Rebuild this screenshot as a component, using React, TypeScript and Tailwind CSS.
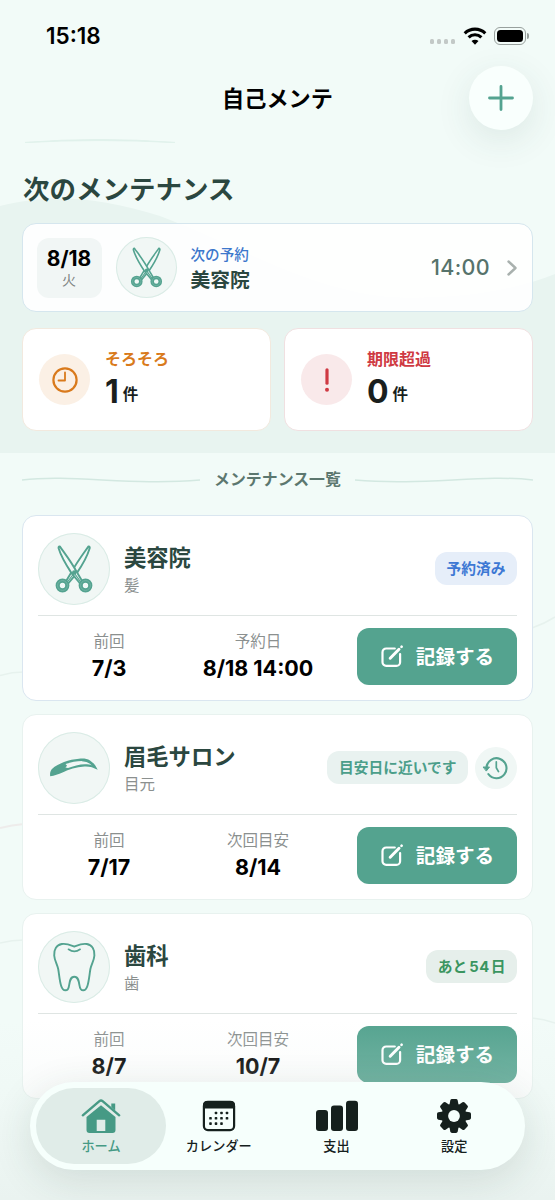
import type { ReactNode } from "react";
import { clsx } from "clsx";

type IconProps = { className?: string };

const ScissorsIcon = ({ className }: IconProps) => (
  <svg viewBox="0 0 72 72" fill="none" className={className}>
    <g stroke="#54a390" strokeWidth="1.9" strokeLinejoin="round">
      <path d="M50.500 13.400c1-.2 1.600.8 1.100 2.200-1.600 5.300-5.500 14-12.800 24.500l-8.600 10.400-2.200-2.200 5.700-9.500C39 29 45.500 20.500 50.500 13.400Z" fill="#f1f8f6" />
      <path d="M21.800 13.400c-1-.2-1.600.8-1.100 2.200C22.300 20.900 26.500 29.600 33.500 40.100l8.600 10.400 2.200-2.200-5.700-9.500C33.500 29 26.800 20.500 21.800 13.400Z" fill="#f1f8f6" />
      <path d="M36.200 40l6.200 8.500M36.200 40l-6.400 8.500" strokeWidth="1.200" />
    </g>
    <circle cx="36.200" cy="39.500" r="2.200" fill="#54a390" />
    {[24.5, 47.5].map((cx) => (
      <g key={cx}>
        <circle cx={cx} cy="52.500" r="4.800" fill="#f1f8f6" stroke="#54a390" strokeWidth="4.200" />
        <circle cx={cx} cy="52.500" r="4.900" stroke="#86c0b1" strokeWidth=".6" />
      </g>
    ))}
  </svg>
);

const EyebrowIcon = ({ className }: IconProps) => (
  <svg viewBox="0 0 72 72" className={className}>
    <path
      d="M12.200 44.200c-.4-2.700 0-4.900 1.500-7C17.500 33.400 21.500 32 26 30c5-1.800 10-2.900 15-3.300 4.500-.4 8.300 0 11 1.700 3.300 2.200 5.700 5 7.700 9.400-4.400-2.500-8.700-3.600-13.200-3.300C38 35 31 37 24.500 40.500c-4 1.800-8 3.300-12.300 3.700ZM27.500 32l1.600 1.700-1.700 1.800 2.600.5c5-1.800 11.500-3.600 17-3.700 2.800 0 5.200.3 7.400 1.100-1.800-2.200-4-3.900-7.400-4.300-6.500-.5-13 .8-19.500 2.900Z"
      fill="#54a390"
      fillRule="evenodd"
    />
    <path d="M44 28.500c5 .2 8.700 2 12 6" fill="none" stroke="#54a390" strokeWidth="1.300" />
  </svg>
);

const ToothIcon = ({ className }: IconProps) => (
  <svg viewBox="0 0 72 72" fill="none" stroke="#54a390" strokeWidth="1.900" strokeLinecap="round" strokeLinejoin="round" className={className}>
    <path d="M36.300 15.600c-3.800-1.500-8-3.500-12.500-2.600-5.500 1-8 6-7.600 11.500.3 5 3 8.500 4 13.500 1 5.500 1.300 11.500 3 17 .9 2.900 2 4.300 4.200 4.300 2.600 0 3.300-1.800 3.700-5 .6-4.300 1.300-8.600 5.200-8.600s4.600 4.300 5.200 8.600c.4 3.200 1.100 5 3.700 5 2.200 0 3.300-1.400 4.200-4.300 1.700-5.500 2-11.500 3-17 1-5 3.700-8.500 4-13.500.4-5.500-2.100-10.500-7.600-11.500-4.500-.9-8.700 1.100-12.500 2.600Z" />
    <path d="M30.500 18.300c3.700 2.600 8 2.600 11.600 0" strokeWidth="1.700" />
  </svg>
);

const EditIcon = () => (
  <svg viewBox="0 0 24 24" fill="none" stroke="white" strokeWidth="2.200" strokeLinecap="round" strokeLinejoin="round" className="size-6">
    <path d="M14.800 4.500H6.200A3.700 3.700 0 0 0 2.500 8.200v10a3.700 3.700 0 0 0 3.700 3.700h10.200a3.700 3.700 0 0 0 3.700-3.700V10" />
    <path d="m10.200 14.200 8.800-8.900" strokeWidth="3" />
    <path d="m21.500 2.900.1-.1" strokeWidth="2.700" />
  </svg>
);

const HistoryIcon = () => (
  <svg viewBox="0 0 28 28" fill="none" stroke="#54a390" strokeWidth="2.100" strokeLinecap="round" strokeLinejoin="round" className="size-7">
    <path d="M4.500 13.500A10 10 0 1 1 6.300 20" />
    <path d="M14.300 7.800v6l2.200 3.800" strokeWidth="1.700" />
    <path d="M1.500 13h6L4.500 16.800Z" fill="#54a390" strokeWidth="1" />
  </svg>
);

const WifiIcon = () => (
  <svg viewBox="0 0 24 18" fill="none" stroke="black" strokeWidth="3.100" className="h-[18px] w-6">
    <path d="M1.700 6.300a14.800 14.800 0 0 1 20.600 0" />
    <path d="M5.600 10.400a9.200 9.200 0 0 1 12.800 0" />
    <path d="M12 17.800 8.500 14.100a5 5 0 0 1 7 0Z" fill="black" stroke="none" />
  </svg>
);

const HomeIcon = () => (
  <svg viewBox="0 0 40 36" className="h-9 w-10">
    <path d="M20 7.300 34.500 19v13a3 3 0 0 1-3 3h-23a3 3 0 0 1-3-3V19Zm-4.300 14.500V33h8.600V21.800Z" fill="#469a85" fillRule="evenodd" />
    <path d="M1.800 17.300 18.400 3.200a2.500 2.500 0 0 1 3.200 0L38.200 17.300" fill="none" stroke="#469a85" strokeWidth="2.400" strokeLinecap="round" />
    <path d="M30.300 9V5.600h3.900v7Z" fill="#469a85" />
  </svg>
);

const CalendarIcon = () => (
  <svg viewBox="0 0 34 32" className="h-8 w-[34px]">
    <rect x="1.900" y="1.900" width="30.200" height="28.200" rx="4" fill="none" stroke="#15201d" strokeWidth="2.200" />
    <path d="M1 8.500V5a4 4 0 0 1 4-4h24a4 4 0 0 1 4 4v3.500Z" fill="#15201d" />
    {[
      [14, 13], [19.5, 13], [25, 13],
      [8.5, 18.3], [14, 18.3], [19.5, 18.3], [25, 18.3],
      [8.5, 23.6], [14, 23.6], [19.5, 23.6],
    ].map(([x, y]) => (
      <rect key={`${x}-${y}`} x={x - 1.3} y={y - 1.3} width="2.600" height="2.600" rx=".7" fill="#15201d" />
    ))}
  </svg>
);

const ChartIcon = () => (
  <svg viewBox="0 0 42 32" fill="#15201d" className="h-8 w-[42px]">
    <rect x="0" y="10" width="12" height="21" rx="3" />
    <rect x="15" y="5.500" width="12" height="25.500" rx="3" />
    <rect x="30" y=".7" width="12" height="30.300" rx="3" />
  </svg>
);

const GearIcon = () => (
  <svg viewBox="0 0 36 36" className="size-9">
    <g fill="#15201d">
      {[0, 45, 90, 135].map((deg) => (
        <path key={deg} d="M14.300 2.400Q14.600 1 16 1h4q1.400 0 1.700 1.400L22.600 7v22l-.9 4.600Q21.400 35 20 35h-4q-1.400 0-1.700-1.400L13.400 29V7Z" transform={`rotate(${deg} 18 18)`} />
      ))}
      <circle cx="18" cy="18" r="12.500" />
    </g>
    <circle cx="18" cy="18" r="5.900" fill="#f6fffc" />
  </svg>
);

const Backdrop = () => (
  <svg viewBox="0 0 555 1200" fill="none" className="absolute inset-0 h-[1200px] w-[555px]">
    <path d="M0 206C50 193 100 197 160 216C240 246 320 298 410 298C470 298 515 290 555 274V453H0Z" fill="#e8f4f0" />
    <path d="M25 142.500Q98 136.500 175 142.500Q98 138.500 25 142.500Z" fill="#dceee8" stroke="#e1f2ec" />
    <path d="M0 675.500Q12 672 24 672M532 628Q544 624 555 617M0 943Q12 940 24 940M532 1018Q544 1019 555 1023" stroke="#e7f2ee" strokeWidth="1.500" />
    <path d="M0 828Q12 825 24 824" stroke="#eeeceb" strokeWidth="2" />
  </svg>
);

type CircleProps = { size: string; children: ReactNode };

const IconCircle = ({ size, children }: CircleProps) => (
  <div className={clsx("shrink-0 overflow-hidden rounded-full bg-[#f1f7f5] ring-1 ring-inset ring-[#d9ebe5]", size)}>{children}</div>
);

const StatusBar = () => (
  <div className="flex h-[66px] items-center justify-between pt-[5px] pr-[26px] pl-[46px]">
    <span className="text-[22.500px] font-semibold">15:18</span>
    <div className="flex items-center">
      <div className="mt-3 mr-2 flex gap-[2.500px]">
        {[0, 1, 2, 3].map((i) => (
          <span key={i} className="size-[4.500px] rounded-[1.500px] bg-[#c3c9c7]" />
        ))}
      </div>
      <WifiIcon />
      <div className="ml-[7px] h-[18px] w-[32px] rounded-[6px] border border-[#98a09d] p-[2px]">
        <div className="h-full rounded-[3.500px] bg-black" />
      </div>
      <span className="ml-px h-[6px] w-[2px] rounded-r-full bg-[#98a09d]" />
    </div>
  </div>
);

const NextReservation = () => (
  <div className="flex h-[89px] items-center rounded-[14px] border-[1.500px] border-[#d5e6ee] bg-white/90 pr-[15px] pl-[13.500px]">
    <div className="flex h-[60px] w-[65px] flex-col items-center justify-center rounded-xl bg-[#f1f6f5]">
      <span className="text-[21px] leading-6 font-bold">8/18</span>
      <span className="text-sm leading-[18px] text-[#7f8583]">火</span>
    </div>
    <div className="ml-[14px]">
      <IconCircle size="size-[61px]">
        <ScissorsIcon className="size-full" />
      </IconCircle>
    </div>
    <div className="ml-[14px] flex-1 pt-px">
      <p className="text-[14.600px] leading-5 font-medium text-[#3d78cc]">次の予約</p>
      <p className="mt-[3px] text-[19.800px] leading-6 font-bold text-[#2b4740]">美容院</p>
    </div>
    <span className="text-[21.500px] font-medium tracking-[0.350px] text-[#56736b]">14:00</span>
    <svg viewBox="0 0 10 16" fill="none" stroke="#a9b1ae" strokeWidth="2.400" strokeLinecap="round" strokeLinejoin="round" className="ml-[17px] h-4 w-[10px]">
      <path d="m1.500 1.500 7 6.500-7 6.500" />
    </svg>
  </div>
);

type CountCardProps = { label: string; count: number; tone: "orange" | "red"; icon: ReactNode };

const CountCard = ({ label, count, tone, icon }: CountCardProps) => (
  <div className={clsx("flex h-[103px] flex-1 items-center rounded-[14px] border-[1.500px] bg-white pl-4", tone === "orange" ? "border-[#f2e9de]" : "border-[#f0e0e1]")}>
    <div className={clsx("flex size-[51px] items-center justify-center rounded-full", tone === "orange" ? "bg-[#fbf0e5]" : "bg-[#f9e9ea]")}>{icon}</div>
    <div className="ml-[15px] pt-px">
      <p className={clsx("text-[16px] leading-5 font-bold", tone === "orange" ? "text-[#d97a1c]" : "text-[#cf3a43]")}>{label}</p>
      <p className="mt-[4px] flex h-[38px] items-center gap-1 text-[#1a1f1e]">
        <span className="text-[32px] leading-[38px] font-bold">{count}</span>
        <span className="pt-[5px] text-[15.500px] leading-6 font-bold">件</span>
      </p>
    </div>
  </div>
);

type Maintenance = {
  name: string;
  category: string;
  icon: ReactNode;
  status: ReactNode;
  tone: "blue" | "teal" | "green";
  history?: boolean;
  last: string;
  nextLabel: string;
  next: string;
};

const items: Maintenance[] = [
  { name: "美容院", category: "髪", icon: <ScissorsIcon className="size-full" />, status: "予約済み", tone: "blue", last: "7/3", nextLabel: "予約日", next: "8/18 14:00" },
  { name: "眉毛サロン", category: "目元", icon: <EyebrowIcon className="size-full" />, status: "目安日に近いです", tone: "teal", history: true, last: "7/17", nextLabel: "次回目安", next: "8/14" },
  {
    name: "歯科",
    category: "歯",
    icon: <ToothIcon className="size-full" />,
    status: <>あと<span className="mr-px ml-[2px] tracking-[0.600px]">54</span>日</>,
    tone: "green",
    last: "8/7",
    nextLabel: "次回目安",
    next: "10/7",
  },
];

const badgeTones = {
  blue: "bg-[#e6eef9] text-[#3d78d4]",
  teal: "bg-[#e9f2f0] text-[#4b9e8a]",
  green: "bg-[#e6efeb] text-[#3a9560]",
};

const DateColumn = ({ label, value }: { label: string; value: string }) => (
  <div className="w-[142px] text-center">
    <p className="text-[15.500px] leading-5 text-[#8b908f]">{label}</p>
    <p className="mt-[2px] text-[21.500px] leading-7 font-bold whitespace-nowrap">{value}</p>
  </div>
);

const MaintenanceCard = ({ item }: { item: Maintenance }) => (
  <li className={clsx("h-[186px] rounded-[14px] border-[1.500px] bg-white px-[15px]", item.tone === "blue" ? "border-[#dae6f0]" : "border-[#e8f2ef]")}>
    <div className="flex h-[99.500px] items-center border-b border-[#dfe5e3] pt-[7px]">
      <IconCircle size="size-[72px]">{item.icon}</IconCircle>
      <div className="ml-[14px] flex-1 pt-[4px]">
        <h3 className="text-[22.300px] leading-7 font-bold text-[#2b4740]">{item.name}</h3>
        <p className="mt-[2px] text-[15.500px] leading-6 text-[#8b908f]">{item.category}</p>
      </div>
      <span className={clsx("flex h-[33px] items-center rounded-xl px-[11.500px] pt-[2px] text-[14.750px] font-bold", badgeTones[item.tone])}>
        <span className="leading-none">{item.status}</span>
      </span>
      {item.history && (
        <button className="ml-[7px] flex size-[42px] items-center justify-center rounded-full bg-[#f0f7f5]" aria-label="履歴">
          <HistoryIcon />
        </button>
      )}
    </div>
    <div className="flex items-center pt-3">
      <div className="pt-[2px]">
        <DateColumn label="前回" value={item.last} />
      </div>
      <div className="ml-[7px] pt-[2px]">
        <DateColumn label={item.nextLabel} value={item.next} />
      </div>
      <button className="ml-auto flex h-[57px] w-[160px] items-center justify-center gap-3 rounded-xl bg-[#54a38f] text-[19.600px] font-bold text-white">
        <EditIcon />
        <span className="pt-[3px]">記録する</span>
      </button>
    </div>
  </li>
);

const tabs = [
  { label: "ホーム", icon: <HomeIcon />, active: true },
  { label: "カレンダー", icon: <CalendarIcon /> },
  { label: "支出", icon: <ChartIcon /> },
  { label: "設定", icon: <GearIcon /> },
];

const TabBar = () => (
  <nav className="absolute bottom-[30px] left-[30px] flex h-[88px] w-[495px] items-center rounded-full bg-[#f6fffc] px-3 shadow-[0_10px_40px_rgba(40,70,60,0.14)]">
    {tabs.map((tab) => (
      <button
        key={tab.label}
        className={clsx(
          "flex h-[76px] flex-1 flex-col items-center justify-center rounded-full text-[13.200px] font-medium",
          tab.active ? "-mx-[6px] grow-0 basis-[130px] bg-[#e0ece8] text-[#469a85]" : "text-[#15201d]"
        )}
      >
        <span className="mt-px flex h-9 items-center">{tab.icon}</span>
        <span className="mt-[2px] leading-5">{tab.label}</span>
      </button>
    ))}
  </nav>
);

export default function App() {
  return (
    <div className="relative h-[1200px] w-[555px] overflow-hidden bg-[#f2fbf8] font-['Inter','Noto_Sans_CJK_JP',sans-serif] text-black" lang="ja">
      <Backdrop />
      <div className="relative">
        <StatusBar />
        <header className="grid h-16 grid-cols-[64px_1fr_64px] items-center px-[22px]">
          <span />
          <h1 className="pt-[2px] text-center text-[22.200px] font-bold">自己メンテ</h1>
          <button className="flex size-16 items-center justify-center rounded-full bg-[#f9fffd] shadow-[0_10px_36px_rgba(50,80,70,0.11)]" aria-label="追加">
            <svg viewBox="0 0 26 26" stroke="#54a390" strokeWidth="2.800" strokeLinecap="round" className="size-[26px]">
              <path d="M13 1.500v23M1.500 13h23" />
            </svg>
          </button>
        </header>

        <section className="h-[323px] px-[22px] pt-[39px]">
          <h2 className="h-[54px] pl-px text-[26.500px] leading-10 font-bold text-[#2b4740]">次のメンテナンス</h2>
          <NextReservation />
          <div className="mt-4 flex gap-[13px]">
            <CountCard
              label="そろそろ"
              count={1}
              tone="orange"
              icon={
                <svg viewBox="0 0 26 26" fill="none" stroke="#d97a1c" strokeWidth="2.200" strokeLinecap="round" strokeLinejoin="round" className="size-[26px]">
                  <circle cx="13" cy="13" r="11.600" />
                  <path d="M13 5.500v8H6.500" strokeWidth="1.800" />
                </svg>
              }
            />
            <CountCard
              label="期限超過"
              count={0}
              tone="red"
              icon={
                <svg viewBox="0 0 6 26" className="h-[26px] w-[6px]">
                  <path d="M3 2.800v13.400" stroke="#cf3a43" strokeWidth="3.200" strokeLinecap="round" />
                  <circle cx="3" cy="22.700" r="2" fill="#cf3a43" />
                </svg>
              }
            />
          </div>
        </section>

        <section className="px-[22px]">
          <div className="flex h-[62px] items-center justify-between pb-[9px]">
            <svg viewBox="0 0 178 8" fill="none" stroke="#d3e8e1" strokeWidth="1.500" className="h-2 w-[178px]">
              <path d="M0 4C50-2 110 10 178 4" />
            </svg>
            <h2 className="text-[15.900px] font-bold text-[#5c776f]">メンテナンス一覧</h2>
            <svg viewBox="0 0 178 8" fill="none" stroke="#d3e8e1" strokeWidth="1.500" className="h-2 w-[178px]">
              <path d="M0 4C68 10 128-2 178 4" />
            </svg>
          </div>
          <ul className="flex flex-col gap-[13px]">
            {items.map((item) => (
              <MaintenanceCard key={item.name} item={item} />
            ))}
          </ul>
        </section>
      </div>

      <div className="pointer-events-none absolute inset-x-0 bottom-0 h-[180px] bg-linear-to-b from-[#e9f2ef]/0 via-[#e9f2ef]/30 to-[#e9f2ef]/90" />
      <TabBar />
    </div>
  );
}
